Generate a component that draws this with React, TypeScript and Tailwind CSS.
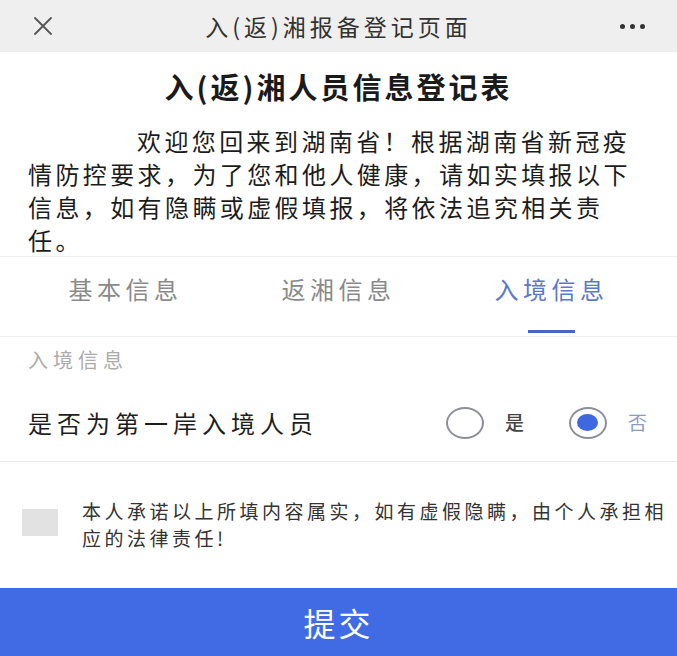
const tabs = ["基本信息", "返湘信息", "入境信息"];

function CloseIcon() {
  return (
    <svg width="20" height="20" viewBox="0 0 20 20" fill="none">
      <path d="M2 2L18 18M18 2L2 18" stroke="#555" strokeWidth="1.8" strokeLinecap="round" />
    </svg>
  );
}

function MoreIcon() {
  return (
    <div className="flex items-center gap-[5px]">
      <span className="w-[5px] h-[5px] rounded-full bg-[#333]" />
      <span className="w-[5px] h-[5px] rounded-full bg-[#333]" />
      <span className="w-[5px] h-[5px] rounded-full bg-[#333]" />
    </div>
  );
}

function Radio({ checked, label }: { checked?: boolean; label: string }) {
  return (
    <div className="flex items-center gap-[21px]">
      <span className="w-[38px] h-[32px] rounded-[50%] border-2 border-[#8b8e96] flex items-center justify-center">
        {checked && <span className="w-[21px] h-[17px] rounded-[50%] bg-[#3d68e0]" />}
      </span>
      <span className={checked ? "text-[19px] text-[#8d9bc2]" : "text-[19px] font-medium text-[#444]"}>
        {label}
      </span>
    </div>
  );
}

export default function App() {
  return (
    <div className="w-[677px] h-[656px] flex flex-col bg-white font-['Noto_Sans_CJK_SC','Noto_Sans',sans-serif] overflow-hidden">
      <header className="h-[52px] shrink-0 bg-[#efefef] grid grid-cols-[90px_1fr_90px] items-center">
        <div className="pl-[33px] flex items-center">
          <CloseIcon />
        </div>
        <h1 className="text-center text-[23px] tracking-[4px] text-[#333] leading-none">入(返)湘报备登记页面</h1>
        <div className="pr-[32px] flex justify-end">
          <MoreIcon />
        </div>
      </header>

      <h2 className="pt-[17px] pb-[21px] text-center text-[29px] leading-[34px] font-bold tracking-[3px] text-[#1a1a1a]">
        入(返)湘人员信息登记表
      </h2>

      <p className="px-[28px] text-[24px] leading-[33px] tracking-[3.4px] indent-[109px] text-[#1c1c1c]">
        欢迎您回来到湖南省！根据湖南省新冠疫情防控要求，为了您和他人健康，请如实填报以下信息，如有隐瞒或虚假填报，将依法追究相关责任。
      </p>

      <nav className="h-[81px] shrink-0 grid grid-cols-3 px-[19px] border-t border-b border-[#ededed]">
        {tabs.map((t, i) => (
          <div key={t} className="flex flex-col items-center pt-[20px]">
            <span
              className={
                i === 2
                  ? "text-[24px] leading-[24px] tracking-[4.5px] text-[#5b79c9]"
                  : "text-[24px] leading-[24px] tracking-[4.5px] text-[#8a8a8a]"
              }
            >
              {t}
            </span>
            {i === 2 && <span className="mt-auto mb-[3px] w-[47px] h-[3px] bg-[#4d63c3]" />}
          </div>
        ))}
      </nav>

      <div className="px-[28px] pt-[11px] pb-[12px] text-[20px] leading-[24px] tracking-[5px] text-[#ababab]">
        入境信息
      </div>

      <div className="h-[78px] shrink-0 flex items-center justify-between pl-[28px] pr-[30px] border-b border-[#ececec]">
        <span className="text-[24px] tracking-[5px] text-[#1e1e1e]">是否为第一岸入境人员</span>
        <div className="flex items-center gap-[45px]">
          <Radio label="是" />
          <Radio checked label="否" />
        </div>
      </div>

      <div className="flex items-start pl-[22px] pt-[35px] gap-[24px]">
        <span className="mt-[12px] w-[36px] h-[27px] shrink-0 bg-[#e2e2e2]" />
        <p className="w-[592px] text-[19px] leading-[27px] tracking-[3.5px] text-[#333]">
          本人承诺以上所填内容属实，如有虚假隐瞒，由个人承担相应的法律责任!
        </p>
      </div>

      <button className="mt-auto h-[68px] shrink-0 w-full bg-[#416be4] text-white text-[32px] tracking-[3px] flex items-center justify-center">
        提交
      </button>
    </div>
  );
}
